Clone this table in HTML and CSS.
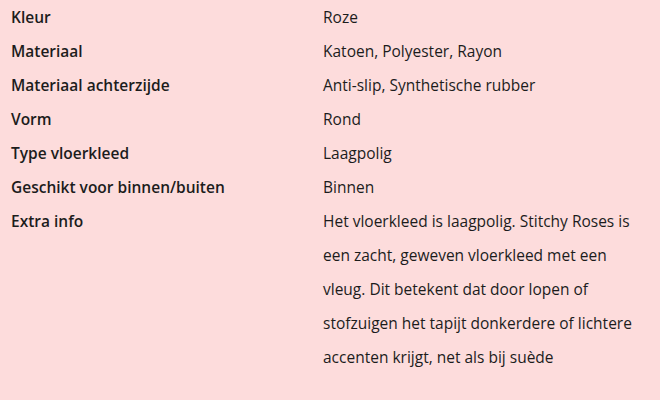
FILE: index.html
```html
<!DOCTYPE html>
<html lang="nl">
<head>
<meta charset="utf-8">
<link rel="stylesheet" href="styles.css">
</head>
<body>
<dl class="specs">
  <dt class="label">Kleur</dt><dd class="value">Roze</dd>
  <dt class="label">Materiaal</dt><dd class="value">Katoen, Polyester, Rayon</dd>
  <dt class="label">Materiaal achterzijde</dt><dd class="value">Anti-slip, Synthetische rubber</dd>
  <dt class="label">Vorm</dt><dd class="value">Rond</dd>
  <dt class="label">Type vloerkleed</dt><dd class="value">Laagpolig</dd>
  <dt class="label">Geschikt voor binnen/buiten</dt><dd class="value">Binnen</dd>
  <dt class="label">Extra info</dt><dd class="value">Het vloerkleed is laagpolig. Stitchy Roses is een zacht, geweven vloerkleed met een vleug. Dit betekent dat door lopen of stofzuigen het tapijt donkerdere of lichtere accenten krijgt, net als bij suède</dd>
</dl>
</body>
</html>
```
FILE: styles.css
```css
html, body {
  margin: 0;
  padding: 0;
  background: #fddcdc;
}
body {
  font-family: "Open Sans", "Lato", sans-serif;
  font-size: 15.5px;
  line-height: 34px;
  color: #1c1c1c;
}
.specs {
  margin: 0;
  display: grid;
  grid-template-columns: 312px 1fr;
}
.label {
  margin: 0;
  padding: 0 11px;
  font-weight: 600;
}
.value {
  margin: 0;
  padding: 0 11px;
}
```
